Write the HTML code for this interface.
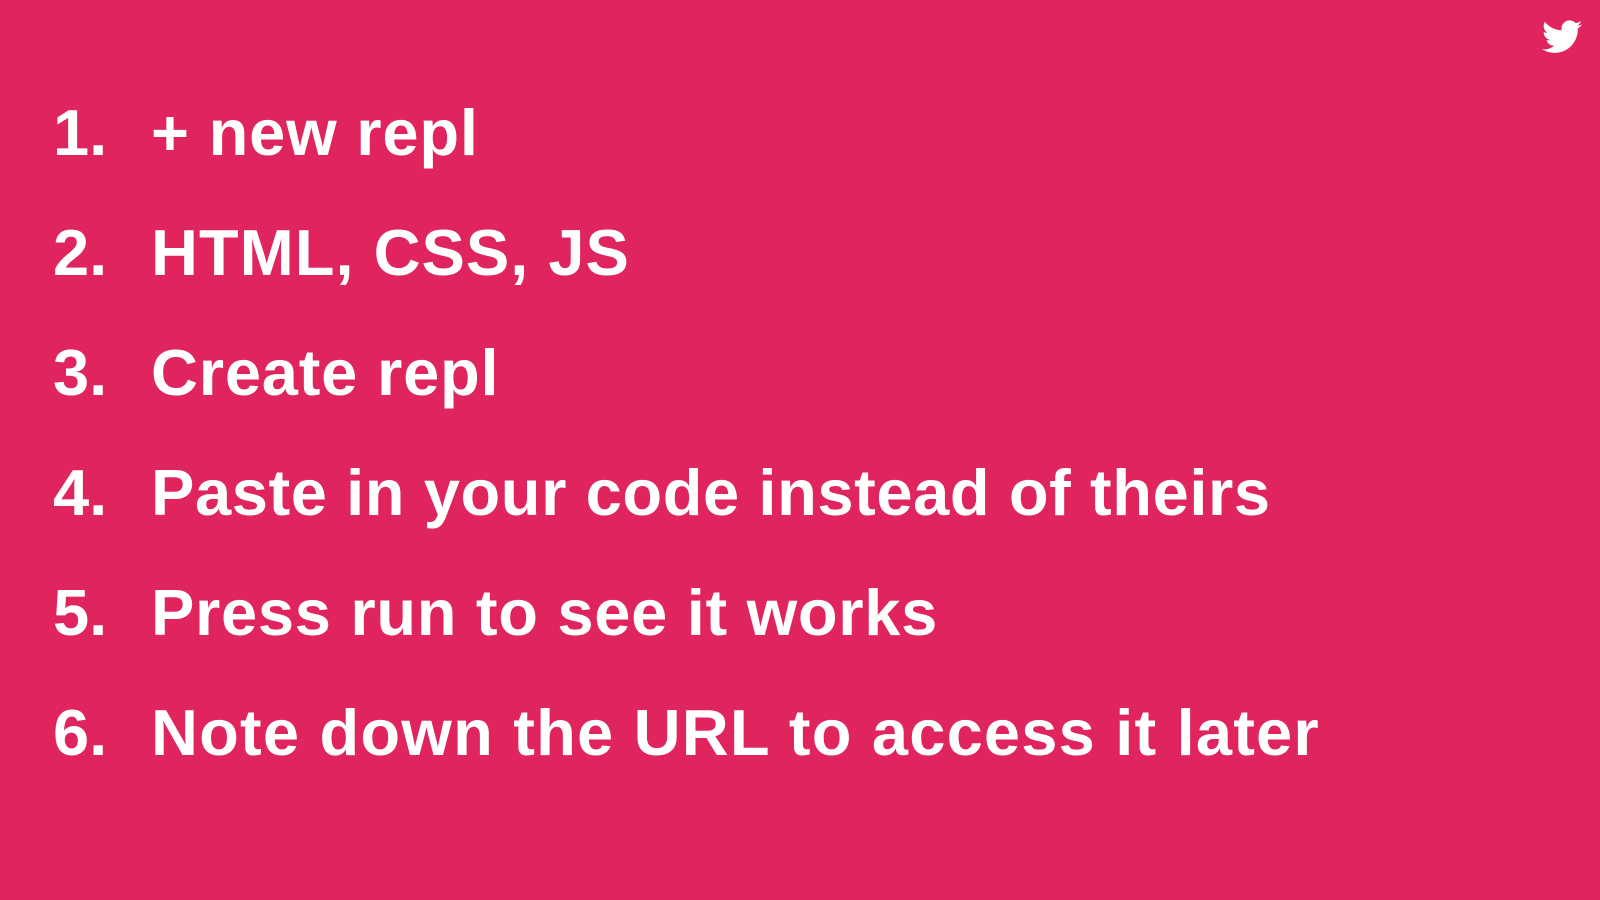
<!DOCTYPE html>
<html><head><meta charset="utf-8"><style>
html,body{margin:0;padding:0}
body{width:1600px;height:900px;background:#E0245E;position:relative;overflow:hidden;font-family:"Liberation Sans",Arial,sans-serif;font-weight:bold;color:#fff}
.l{position:absolute;left:0;font-size:65px;line-height:65px;white-space:nowrap}
.n{position:absolute;left:53px}
.t{position:absolute;left:151px;letter-spacing:0.8px}
svg{position:absolute;left:1542px;top:20px}
</style></head><body>
<div class="l" style="top:100px"><span class="n">1.</span><span class="t">+ new repl</span></div>
<div class="l" style="top:220px"><span class="n">2.</span><span class="t" style="letter-spacing:1px">HTML, CSS, JS</span></div>
<div class="l" style="top:340px"><span class="n">3.</span><span class="t">Create repl</span></div>
<div class="l" style="top:460px"><span class="n">4.</span><span class="t" style="letter-spacing:0.6px">Paste in your code instead of theirs</span></div>
<div class="l" style="top:580px"><span class="n">5.</span><span class="t" style="letter-spacing:0.7px">Press run to see it works</span></div>
<div class="l" style="top:700px"><span class="n">6.</span><span class="t" style="letter-spacing:1.2px">Note down the URL to access it later</span></div>
<svg width="40" height="34" viewBox="0 0 24 20"><path fill="#fff" d="M24 2.4c-.9.4-1.8.7-2.8.8 1-.6 1.8-1.6 2.2-2.7-1 .6-2 1-3.1 1.2C19.4.7 18.1 0 16.6 0c-2.7 0-4.9 2.2-4.9 4.9 0 .4 0 .8.1 1.1C7.7 5.8 4.1 3.9 1.7.9c-.4.7-.7 1.6-.7 2.5 0 1.7.9 3.2 2.2 4.1-.8 0-1.6-.2-2.2-.6v.1c0 2.4 1.7 4.4 3.9 4.8-.4.1-.8.2-1.3.2-.3 0-.6 0-.9-.1.6 2 2.4 3.4 4.6 3.4-1.7 1.3-3.8 2.1-6.1 2.1-.4 0-.8 0-1.2-.1 2.2 1.4 4.8 2.2 7.5 2.2 9.1 0 14-7.5 14-14v-.6c1-.7 1.8-1.6 2.5-2.5z"/></svg>
</body></html>
